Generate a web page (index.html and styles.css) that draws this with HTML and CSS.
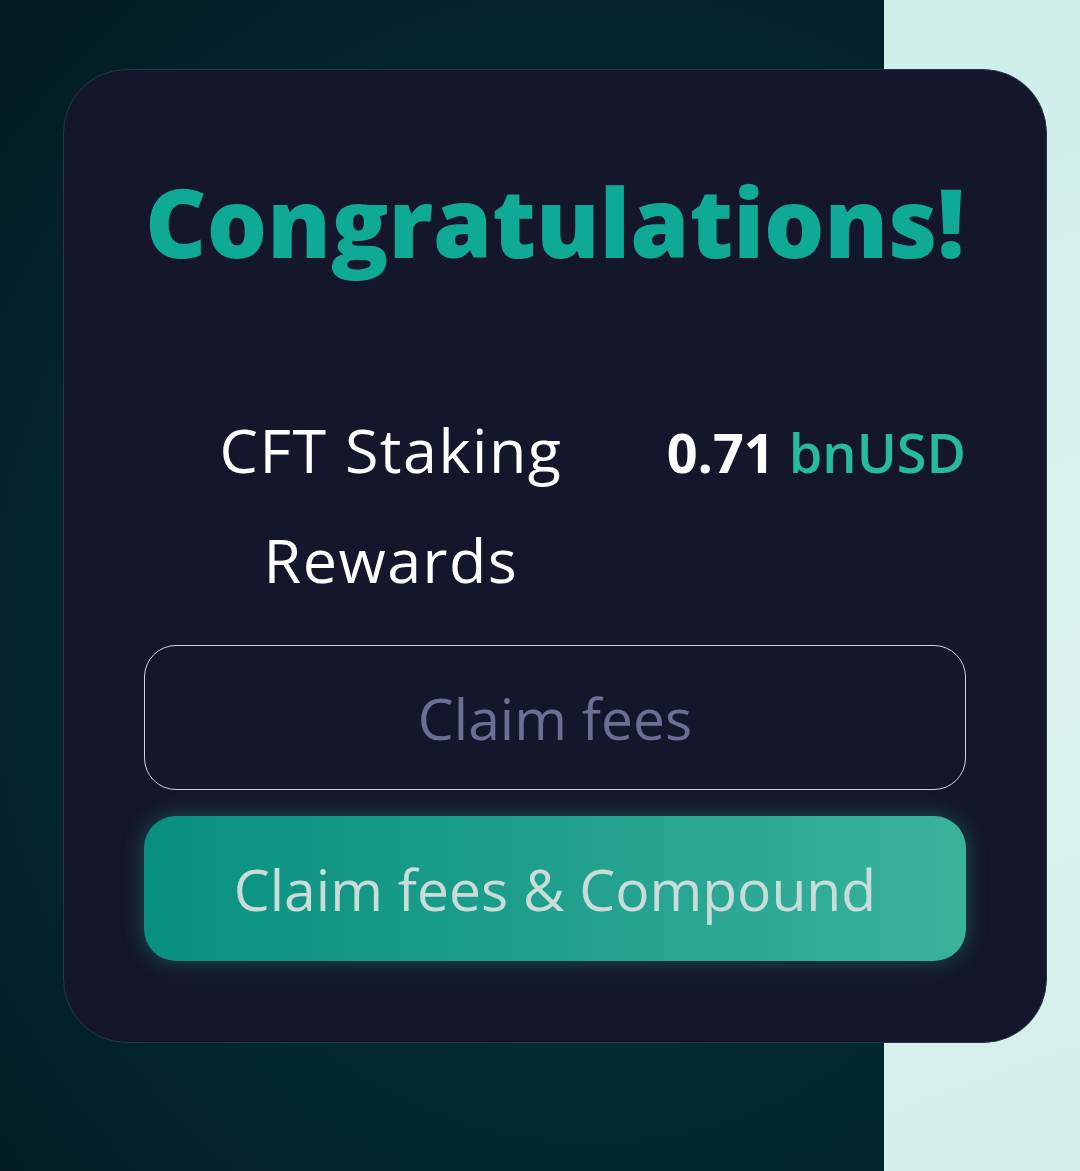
FILE: index.html
```html
<!DOCTYPE html>
<html>
<head>
    <title>Rewards</title>
    <link rel="stylesheet" href="styles.css">
</head>
<body>
    <div class="card">
        <h1 class="title">Congratulations!</h1>

        <div class="reward-row">
            <div class="reward-label">CFT Staking Rewards</div>
            <div class="reward-value">0.71 <span class="token">bnUSD</span></div>
        </div>

        <button class="btn btn-outline">Claim fees</button>
        <button class="btn btn-primary">Claim fees &amp; Compound</button>
    </div>
</body>
</html>
```

FILE: styles.css
```css
html, body {
    height: 100%;
}
body {
    margin: 0;
    font-family: "Open Sans", "Noto Sans", sans-serif;
    background:
        linear-gradient(160deg, #cdeee9 0%, #dcf3ef 60%, #d2efea 100%) right top / 196px 100% no-repeat,
        radial-gradient(ellipse at 55% 55%, #043540 0%, #032b33 45%, #021b22 100%);
    overflow: hidden;
}
.card {
    box-sizing: border-box;
    width: 984px;
    height: 974px;
    margin: 69px 0 0 63px;
    padding: 104px 60px 0 60px;
    background: #14162b;
    border: 1px solid #2b3548;
    border-radius: 64px;
}
.title {
    margin: 0;
    font-size: 95px;
    font-weight: 800;
    line-height: 1;
    color: #0faa95;
    text-align: center;
}
.reward-row {
    display: flex;
    justify-content: space-between;
    align-items: flex-start;
    margin-top: 181px;
    padding-left: 82px;
    padding-right: 20px;
}
.reward-label {
    width: 370px;
    font-size: 61px;
    line-height: 110px;
    letter-spacing: 1.5px;
    color: #ffffff;
    text-align: center;
    margin-top: -55px;
}
.reward-value {
    font-size: 54px;
    font-weight: 700;
    color: #ffffff;
    margin-top: -35px;
}
.token {
    font-weight: 600;
    color: #25bb9c;
}
.btn {
    display: block;
    box-sizing: border-box;
    width: 822px;
    height: 145px;
    margin: 0 auto;
    font-family: inherit;
    font-size: 57px;
    border-radius: 32px;
    cursor: pointer;
}
.btn-outline {
    margin-top: 30px;
    background: transparent;
    border: 1.5px solid #cfcfe3;
    color: #6c6f95;
}
.btn-primary {
    margin-top: 26px;
    border: none;
    background: linear-gradient(90deg, #08907f 0%, #1fa08d 50%, #3ab39b 100%);
    color: #c9dcd7;
    box-shadow: 0 0 22px rgba(40, 190, 170, 0.35);
}
```
